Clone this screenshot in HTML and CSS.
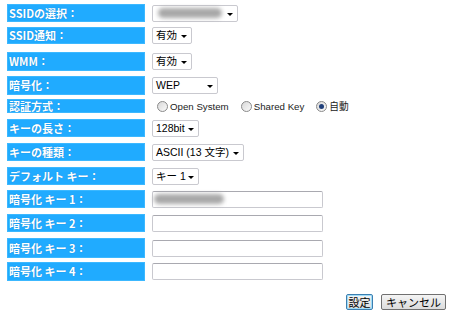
FILE: index.html
```html
<!DOCTYPE html>
<html lang="ja">
<head>
    <meta charset="UTF-8">
    <title>無線設定</title>
    <link rel="stylesheet" href="styles.css">
</head>
<body>
    <div class="form">
        <div class="row first">
            <div class="label">SSIDの選択：</div>
            <div class="select w-ssid"><span class="blur blur-ssid"></span><span class="arrow"></span></div>
        </div>
        <div class="row r2">
            <div class="label">SSID通知：</div>
            <div class="select w-on"><span class="val">有効</span><span class="arrow"></span></div>
        </div>
        <div class="row r3">
            <div class="label">WMM：</div>
            <div class="select w-on"><span class="val">有効</span><span class="arrow"></span></div>
        </div>
        <div class="row r4">
            <div class="label">暗号化：</div>
            <div class="select w-wep"><span class="val">WEP</span><span class="arrow"></span></div>
        </div>
        <div class="row r5">
            <div class="label">認証方式：</div>
            <div class="radios">
                <label class="radio"><span class="dot"></span>Open System</label>
                <label class="radio"><span class="dot"></span>Shared Key</label>
                <label class="radio"><span class="dot checked"></span>自動</label>
            </div>
        </div>
        <div class="row">
            <div class="label">キーの長さ：</div>
            <div class="select w-bit"><span class="val">128bit</span><span class="arrow"></span></div>
        </div>
        <div class="row">
            <div class="label">キーの種類：</div>
            <div class="select w-ascii"><span class="val">ASCII (13 文字)</span><span class="arrow"></span></div>
        </div>
        <div class="row">
            <div class="label">デフォルト キー：</div>
            <div class="select w-bit"><span class="val">キー 1</span><span class="arrow"></span></div>
        </div>
        <div class="row r9">
            <div class="label">暗号化 キー 1：</div>
            <div class="input"><span class="blur blur-key"></span></div>
        </div>
        <div class="row">
            <div class="label">暗号化 キー 2：</div>
            <div class="input"></div>
        </div>
        <div class="row r11">
            <div class="label">暗号化 キー 3：</div>
            <div class="input"></div>
        </div>
        <div class="row r12">
            <div class="label">暗号化 キー 4：</div>
            <div class="input"></div>
        </div>
    </div>

    <div class="actions">
        <button class="btn primary">設定</button>
        <button class="btn">キャンセル</button>
    </div>
</body>
</html>
```

FILE: styles.css
```css
* {
    margin: 0;
    padding: 0;
    box-sizing: border-box;
}

body {
    font-family: "Liberation Sans", "Noto Sans CJK JP", sans-serif;
    font-size: 10.5px;
    color: #000;
    background: #fff;
    width: 450px;
    height: 315px;
    overflow: hidden;
}

.form {
    padding-left: 7px;
}

.row {
    display: flex;
    align-items: center;
    height: 18px;
    margin-top: 6px;
}

.row.first { margin-top: 4px; }
.row.r2 { margin-top: 5px; height: 17px; }
.row.r3 { margin-top: 8px; height: 19px; }
.row.r4 { margin-top: 5px; height: 19px; }
.row.r5 { margin-top: 4px; height: 14px; }
.row.r9 { margin-top: 5px; }
.row.r11 { height: 20px; }
.row.r12 { margin-top: 4px; height: 19px; }

.label {
    width: 138px;
    height: 100%;
    background: #20abff;
    border: 1px solid #3cb8ff;
    color: #fff;
    font-family: "Noto Sans CJK JP", "DejaVu Sans", sans-serif;
    font-size: 11px;
    font-weight: bold;
    line-height: 15px;
    padding-left: 1px;
    display: flex;
    align-items: center;
    white-space: nowrap;
    text-shadow: 0 0 1px rgba(0, 60, 120, 0.4);
}

.select {
    position: relative;
    margin-left: 7px;
    height: 17px;
    border: 1px solid #c9c9cf;
    border-radius: 2px;
    background: #fff;
    display: flex;
    align-items: center;
    padding-left: 3px;
}

.select .val {
    line-height: 15px;
    white-space: nowrap;
}

.arrow {
    position: absolute;
    right: 4px;
    top: 7px;
    width: 0;
    height: 0;
    border-left: 3px solid transparent;
    border-right: 3px solid transparent;
    border-top: 3px solid #000;
}

.w-ssid { width: 86px; }
.w-on { width: 40px; }
.w-wep { width: 66px; }
.w-bit { width: 47px; }
.w-ascii { width: 92px; }

.blur {
    display: block;
    height: 10px;
    background: #a8a8a8;
    border-radius: 5px;
    filter: blur(2px);
}

.blur-ssid { width: 64px; margin-left: 2px; }
.blur-key { width: 70px; margin-left: 1px; }

.input {
    margin-left: 7px;
    width: 171px;
    height: 17px;
    border: 1px solid #c9c9cf;
    border-top-color: #a9a9b0;
    border-radius: 2px;
    background: #fff;
    display: flex;
    align-items: center;
}

.radios {
    display: flex;
    align-items: center;
    margin-left: 12px;
    gap: 12px;
    font-size: 9.7px;
    color: #222;
}

.radio {
    display: flex;
    align-items: center;
    gap: 2px;
    white-space: nowrap;
}

.dot {
    width: 11px;
    height: 11px;
    border-radius: 50%;
    border: 1px solid #8a8a8a;
    background: linear-gradient(135deg, #d8d8d8, #fafafa);
    position: relative;
}

.dot.checked::after {
    content: "";
    position: absolute;
    left: 2px;
    top: 2px;
    width: 5px;
    height: 5px;
    border-radius: 50%;
    background: #1f3f7a;
}

.actions {
    display: flex;
    justify-content: flex-end;
    gap: 8px;
    padding-right: 4px;
    margin-top: 13px;
}

.btn {
    font-family: "Noto Sans CJK JP", sans-serif;
    font-size: 11px;
    height: 16px;
    line-height: 12px;
    padding: 0 4px;
    border: 1px solid #707070;
    border-radius: 2px;
    background: linear-gradient(#f4f4f4, #dcdcdc);
    color: #000;
}

.btn.primary {
    width: 27px;
    padding: 0;
    border-color: #3c7fb1;
    box-shadow: inset 0 0 0 1px #9fdcf8;
}

.btn:not(.primary) {
    width: 65px;
}
```
